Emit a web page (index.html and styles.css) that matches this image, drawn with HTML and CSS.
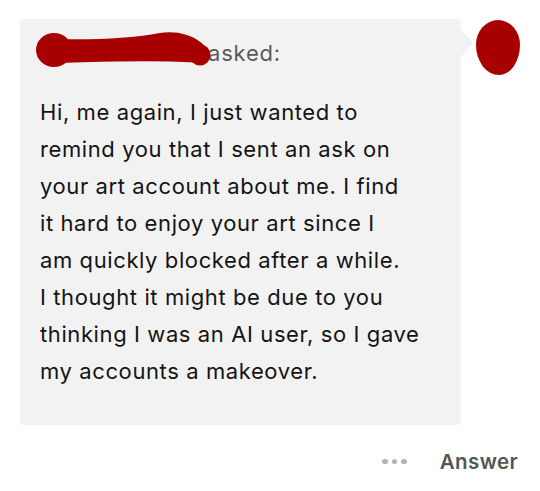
FILE: index.html
```html
<!DOCTYPE html>
<html>
<head>
<meta charset="utf-8">
<link rel="stylesheet" href="styles.css">
</head>
<body>
<div class="page">
  <div class="row">
    <div class="bubble">
      <div class="asker"><span class="name"></span><span class="asked">asked:</span></div>
      <svg class="scribble" width="200" height="60" viewBox="0 0 200 60" aria-hidden="true">
        <g fill="#a80000" stroke="#a80000" stroke-linecap="round" stroke-linejoin="round">
          <ellipse cx="34" cy="31" rx="18" ry="17" stroke="none"/>
          <path d="M 36 29 C 80 30, 118 27, 140 23 C 158 20, 172 26, 178 33" stroke-width="18" fill="none"/>
          <path d="M 36 36 C 80 35, 140 32, 180 36" stroke-width="16" fill="none"/>
          <circle cx="180" cy="36" r="10.5" stroke="none"/>
        </g>
      </svg>
      <p class="msg">Hi, me again, I just wanted to<br>remind you that I sent an ask on<br>your art account about me. I find<br>it hard to enjoy your art since I<br>am quickly blocked after a while.<br>I thought it might be due to you<br>thinking I was an AI user, so I gave<br>my accounts a makeover.</p>
    </div>
    <div class="avatar"></div>
  </div>
  <div class="actions">
    <span class="dots"><i></i><i></i><i></i></span>
    <span class="answer">Answer</span>
  </div>
</div>
</body>
</html>
```
FILE: styles.css
```css
* { box-sizing: border-box; }
html, body { margin: 0; padding: 0; background: #fff; }
body { width: 540px; height: 491px; overflow: hidden; font-family: Inter, "Noto Sans", sans-serif; }
.page { padding: 19px 0 0 20px; }
.row { display: flex; align-items: flex-start; }
.bubble {
  position: relative;
  width: 441px;
  height: 406px;
  background: #f2f2f2;
  border-radius: 4px;
  padding: 19px 20px 0 20px;
}
.bubble::after {
  content: "";
  position: absolute;
  right: -12px;
  top: 10px;
  border-top: 14px solid transparent;
  border-bottom: 14px solid transparent;
  border-left: 12px solid #f2f2f2;
}
.asker { display: flex; font-size: 22px; color: #5a5a5a; height: 30px; line-height: 30px; letter-spacing: 0.8px; }
.asker .name { width: 168px; flex: none; }
.scribble { position: absolute; left: 0; top: 0; }
.msg {
  margin: 26px 0 0 0;
  font-size: 22px;
  line-height: 37px;
  letter-spacing: 0.6px;
  color: #141414;
}
.avatar {
  margin: 1px 0 0 15px;
  width: 44px;
  height: 55px;
  background: #a80000;
  border-radius: 50% 50% 48% 52% / 45% 45% 55% 55%;
}
.actions {
  display: flex;
  justify-content: flex-end;
  align-items: center;
  width: 498px;
  margin-top: 24px;
  gap: 33px;
}
.dots { display: flex; gap: 4px; }
.dots i { width: 5.5px; height: 5.5px; border-radius: 50%; background: #b3b3b3; display: block; }
.answer { font-size: 20.5px; font-weight: 600; color: #555; letter-spacing: 0.4px; }
```
